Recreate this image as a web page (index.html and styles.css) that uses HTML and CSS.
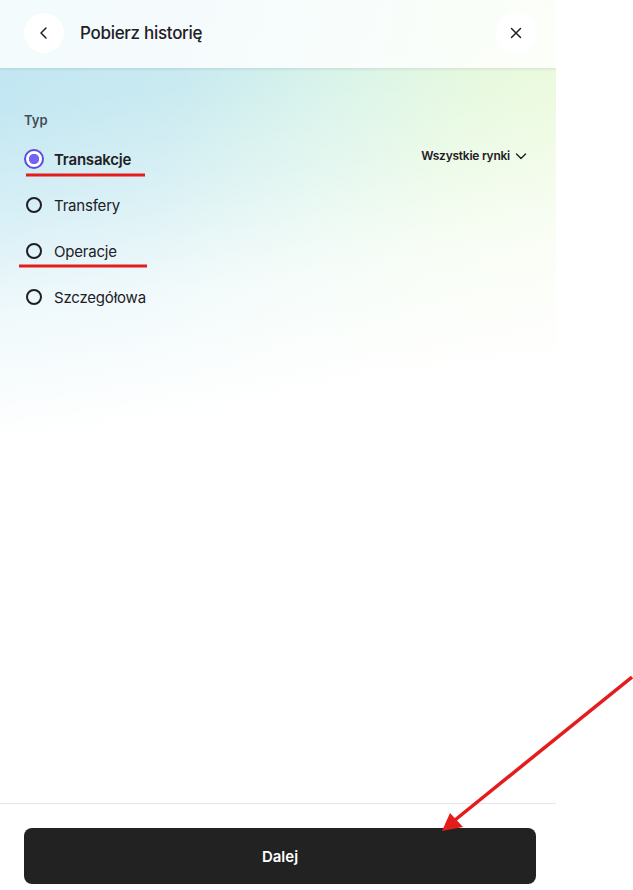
FILE: index.html
```html
<!DOCTYPE html>
<html lang="pl">
<head>
<meta charset="utf-8">
<link rel="stylesheet" href="styles.css">
</head>
<body>
<div class="panel">
  <div class="bg"></div>
  <header class="header">
    <button class="circle-btn" aria-label="Wstecz">
      <svg width="16" height="16" viewBox="0 0 16 16"><path d="M10 3 L5 8 L10 13" fill="none" stroke="#1e2026" stroke-width="1.5" stroke-linecap="round" stroke-linejoin="round"/></svg>
    </button>
    <h1 class="title">Pobierz historię</h1>
    <button class="circle-btn close" aria-label="Zamknij">
      <svg width="16" height="16" viewBox="0 0 16 16"><path d="M3.5 3.5 L12.5 12.5 M12.5 3.5 L3.5 12.5" fill="none" stroke="#1e2026" stroke-width="1.5" stroke-linecap="round"/></svg>
    </button>
  </header>
  <main class="content">
    <div class="label">Typ</div>
    <div class="type-row">
      <ul class="radios">
        <li class="radio selected"><span class="dot"></span><span class="rtext">Transakcje</span></li>
        <li class="radio"><span class="dot"></span><span class="rtext">Transfery</span></li>
        <li class="radio"><span class="dot"></span><span class="rtext">Operacje</span></li>
        <li class="radio"><span class="dot"></span><span class="rtext">Szczegółowa</span></li>
      </ul>
      <div class="market">Wszystkie rynki
        <svg width="14" height="14" viewBox="0 0 14 14"><path d="M2.5 5 L7 9.5 L11.5 5" fill="none" stroke="#1e2026" stroke-width="1.4" stroke-linecap="round" stroke-linejoin="round"/></svg>
      </div>
    </div>
  </main>
  <footer class="footer">
    <button class="primary">Dalej</button>
  </footer>
</div>
<svg class="annot" width="633" height="890" viewBox="0 0 633 890">
  <line x1="26" y1="175" x2="145" y2="175" stroke="#e41c1c" stroke-width="3"/>
  <line x1="19" y1="266" x2="147" y2="266" stroke="#e41c1c" stroke-width="3"/>
  <line x1="632" y1="677" x2="455" y2="820" stroke="#e41c1c" stroke-width="3.5"/>
  <polygon points="442,831 450,813 463,827" fill="#e41c1c"/>
</svg>
</body>
</html>
```
FILE: styles.css
```css
html, body {
  margin: 0;
  padding: 0;
  background: #fff;
  font-family: Inter, "Noto Sans", "Liberation Sans", sans-serif;
  color: #1e2026;
}
.panel {
  position: relative;
  width: 556px;
  height: 890px;
  display: flex;
  flex-direction: column;
  overflow: hidden;
}
.bg {
  position: absolute;
  inset: 0;
  z-index: 0;
  background:
    linear-gradient(172deg, rgba(255,255,255,0) 0px, rgba(255,255,255,0.05) 110px, rgba(255,255,255,0.35) 210px, rgba(255,255,255,0.75) 310px, #fff 440px),
    linear-gradient(100deg, #c0e6f2 0%, #c6e9f0 30%, #d6f3e8 55%, #e2f8da 75%, #ecfad6 100%);
  background-repeat: no-repeat;
  background-size: 100% 100%, 100% 500px;
}
.header, .content, .footer { position: relative; z-index: 1; }
.header {
  height: 68px;
  box-sizing: border-box;
  display: flex;
  align-items: center;
  padding: 0 20px 2px 24px;
  background: rgba(255,255,255,0.82);
  box-shadow: 0 1px 3px rgba(0,0,0,0.10);
}
.circle-btn {
  width: 40px;
  height: 40px;
  border-radius: 50%;
  border: none;
  background: #fff;
  display: flex;
  align-items: center;
  justify-content: center;
  padding: 0;
  flex: none;
}
.title {
  margin: 0 0 0 16px;
  font-size: 17px;
  font-weight: 500;
  flex: 1;
  letter-spacing: -0.3px;
}
.content {
  flex: 1;
  padding: 44px 28px 0 24px;
}
.label {
  font-size: 13px;
  font-weight: 600;
  color: #474d57;
  line-height: 16px;
  margin-bottom: 8px;
}
.type-row {
  display: flex;
  justify-content: space-between;
  align-items: flex-start;
}
.radios {
  list-style: none;
  margin: 0;
  padding: 0;
}
.radio {
  height: 46px;
  display: flex;
  align-items: center;
  font-size: 15px;
  letter-spacing: -0.2px;
}
.dot {
  width: 16px;
  height: 16px;
  box-sizing: border-box;
  border: 2px solid #1e2026;
  border-radius: 50%;
  margin: 0 12px 0 2px;
  flex: none;
}
.radio.selected .dot {
  width: 20px;
  height: 20px;
  margin: 0 10px 0 0;
  border: 2.5px solid #5a4be6;
  background: radial-gradient(circle, #7264f4 0 4.8px, #fff 5.5px);
}
.radio.selected .rtext { font-weight: 600; }
.market {
  display: flex;
  align-items: center;
  gap: 4px;
  font-size: 12px;
  font-weight: 600;
  letter-spacing: -0.25px;
  margin-top: 12px;
}
.footer {
  border-top: 1px solid #e6e6e6;
  padding: 24px 20px 6px 24px;
  height: 87px;
  box-sizing: border-box;
  background: #fff;
}
.primary {
  width: 512px;
  height: 56px;
  border: none;
  border-radius: 8px;
  background: #222;
  color: #fff;
  font-family: inherit;
  font-size: 15px;
  font-weight: 600;
}
.annot {
  position: absolute;
  left: 0;
  top: 0;
  pointer-events: none;
  z-index: 5;
}
```
